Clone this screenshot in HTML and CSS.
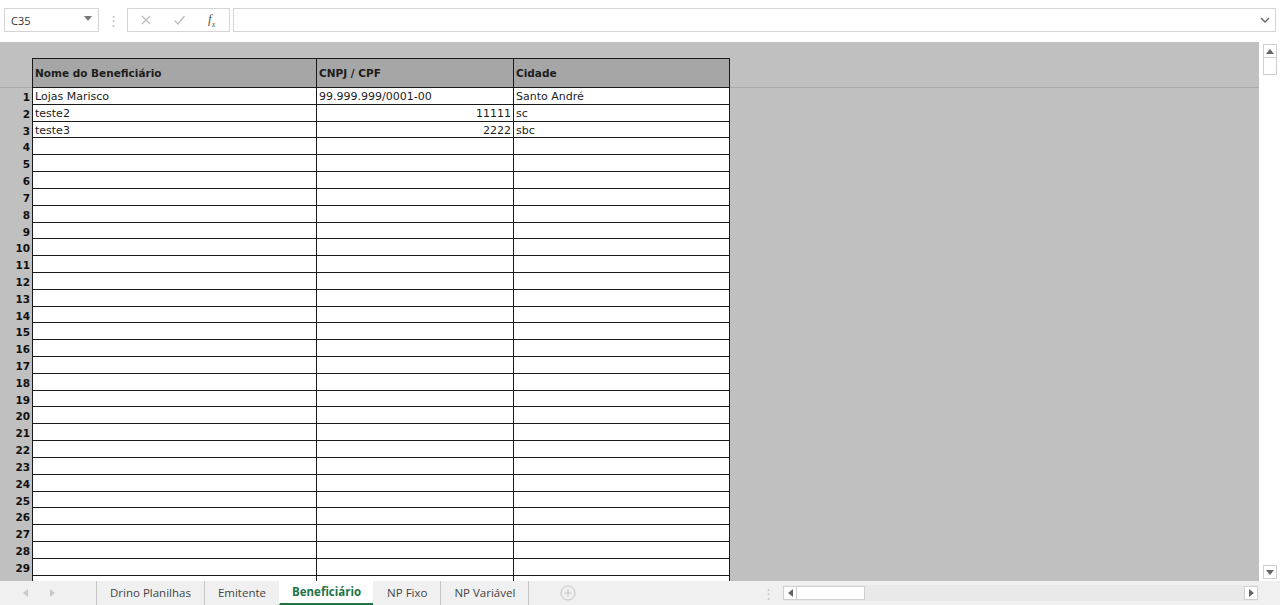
FILE: index.html
```html
<!DOCTYPE html>
<html lang="pt">
<head>
    <meta charset="UTF-8">
    <title>Beneficiário</title>
    <link rel="stylesheet" href="styles.css">
</head>
<body>
    <div class="formula-bar">
        <div class="name-box">
            <span>C35</span>
            <svg width="8" height="5" viewBox="0 0 8 5"><path d="M0 0 L8 0 L4 5 Z" fill="#777"/></svg>
        </div>
        <div class="grip">&#8942;</div>
        <div class="fx-buttons">
            <svg width="12" height="12" viewBox="0 0 12 12"><path d="M2 2 L10 10 M10 2 L2 10" stroke="#bdbdbd" stroke-width="1.2"/></svg>
            <svg width="13" height="12" viewBox="0 0 13 12"><path d="M1.5 6.5 L5 10 L11.5 2" stroke="#bdbdbd" stroke-width="1.3" fill="none"/></svg>
            <span class="fx">f<sub>x</sub></span>
        </div>
        <div class="formula-input">
            <svg width="10" height="6" viewBox="0 0 10 6"><path d="M1 1 L5 5 L9 1" stroke="#666" stroke-width="1.4" fill="none"/></svg>
        </div>
    </div>

    <div class="sheet-area">
        <div class="sheet" id="sheet">
            <div class="spacer"></div>

            <div class="rh head-line"></div>
            <div class="cell head first">Nome do Beneficiário</div>
            <div class="cell head">CNPJ / CPF</div>
            <div class="cell head">Cidade</div>
            <div class="fill head-line"></div>

            <div class="rh">1</div>
            <div class="cell first">Lojas Marisco</div>
            <div class="cell">99.999.999/0001-00</div>
            <div class="cell">Santo André</div>
            <div class="fill"></div>

            <div class="rh">2</div>
            <div class="cell first">teste2</div>
            <div class="cell num">11111</div>
            <div class="cell">sc</div>
            <div class="fill"></div>

            <div class="rh">3</div>
            <div class="cell first">teste3</div>
            <div class="cell num">2222</div>
            <div class="cell">sbc</div>
            <div class="fill"></div>
        </div>
        <div class="vscroll">
            <div class="sbtn"><svg width="8" height="5" viewBox="0 0 8 5"><path d="M0 5 L8 5 L4 0 Z" fill="#666"/></svg></div>
            <div class="vthumb"></div>
            <div class="vtrack"></div>
            <div class="sbtn"><svg width="8" height="5" viewBox="0 0 8 5"><path d="M0 0 L8 0 L4 5 Z" fill="#666"/></svg></div>
        </div>
    </div>

    <div class="tab-bar">
        <div class="tab-nav">
            <svg width="5" height="8" viewBox="0 0 5 8"><path d="M5 0 L5 8 L0 4 Z" fill="#c8c8c8"/></svg>
            <svg width="5" height="8" viewBox="0 0 5 8"><path d="M0 0 L0 8 L5 4 Z" fill="#c8c8c8"/></svg>
        </div>
        <div class="tabs">
            <div class="tab">Drino Planilhas</div>
            <div class="tab">Emitente</div>
            <div class="tab active">Beneficiário</div>
            <div class="tab">NP Fixo</div>
            <div class="tab last">NP Variável</div>
            <div class="add-tab">
                <svg width="16" height="16" viewBox="0 0 16 16"><circle cx="8" cy="8" r="7" fill="none" stroke="#c4c4c4"/><path d="M8 4.5 V11.5 M4.5 8 H11.5" stroke="#c4c4c4"/></svg>
            </div>
        </div>
        <div class="grip small">&#8942;</div>
        <div class="hscroll">
            <div class="sbtn"><svg width="5" height="8" viewBox="0 0 5 8"><path d="M5 0 L5 8 L0 4 Z" fill="#666"/></svg></div>
            <div class="hthumb"></div>
            <div class="htrack"></div>
            <div class="sbtn"><svg width="5" height="8" viewBox="0 0 5 8"><path d="M0 0 L0 8 L5 4 Z" fill="#666"/></svg></div>
        </div>
    </div>

    <script>
        // linhas vazias 4 a 30
        var sheet = document.getElementById('sheet');
        for (var i = 4; i <= 30; i++) {
            sheet.insertAdjacentHTML('beforeend',
                '<div class="rh">' + i + '</div>' +
                '<div class="cell first"></div><div class="cell"></div><div class="cell"></div>' +
                '<div class="fill"></div>');
        }
    </script>
</body>
</html>
```

FILE: styles.css
```css
body {
    margin: 0;
    padding: 0;
    width: 1280px;
    height: 605px;
    overflow: hidden;
    background: #ffffff;
    font-family: 'Open Sans', 'Noto Sans', sans-serif;
    display: flex;
    flex-direction: column;
}

/* barra de fórmulas */
.formula-bar {
    height: 42px;
    box-sizing: border-box;
    padding: 8px 4px 0 4px;
    display: flex;
    align-items: flex-start;
    background: #ffffff;
}

.name-box {
    width: 95px;
    height: 24px;
    box-sizing: border-box;
    border: 1px solid #d4d4d4;
    display: flex;
    align-items: center;
    justify-content: space-between;
    padding: 0 6px 0 6px;
    font-size: 11px;
    color: #333;
}

.name-box svg {
    margin-top: -4px;
}

.grip {
    width: 28px;
    height: 24px;
    text-align: center;
    line-height: 24px;
    color: #c4c4c4;
    font-size: 13px;
}

.grip.small {
    width: 30px;
    height: 24px;
    line-height: 24px;
    margin-left: auto;
}

.fx-buttons {
    width: 103px;
    height: 24px;
    box-sizing: border-box;
    border: 1px solid #d4d4d4;
    display: flex;
    align-items: center;
    padding-left: 12px;
    gap: 21px;
}

.fx {
    font-family: 'Liberation Serif', serif;
    font-style: italic;
    font-size: 13px;
    color: #555;
    margin-left: 1px;
}

.fx sub {
    font-size: 8px;
}

.formula-input {
    flex: 1;
    margin-left: 3px;
    height: 24px;
    box-sizing: border-box;
    border: 1px solid #d4d4d4;
    display: flex;
    align-items: center;
    justify-content: flex-end;
    padding-right: 5px;
}

/* planilha */
.sheet-area {
    height: 539px;
    display: flex;
    overflow: hidden;
}

.sheet {
    flex: 1;
    background: #c0c0c0;
    display: grid;
    grid-template-columns: 32px 285px 197px 216px 1fr;
    grid-template-rows: 16px 30px;
    grid-auto-rows: 16.82px;
    align-content: start;
    font-family: 'DejaVu Sans', sans-serif;
    color: #1c1c1c;
    overflow: hidden;
}

.spacer {
    grid-column: 1 / -1;
}

.rh {
    font-size: 10.5px;
    font-weight: bold;
    text-align: right;
    padding-right: 2px;
    line-height: 18px;
    color: #111;
}

.head-line {
    border-bottom: 1px solid #aaaaaa;
}

.cell {
    box-sizing: border-box;
    background: #ffffff;
    border-right: 1px solid #1a1a1a;
    border-bottom: 1px solid #1a1a1a;
    font-size: 11px;
    line-height: 17px;
    padding-left: 2px;
    white-space: nowrap;
    overflow: hidden;
}

.cell.first {
    border-left: 1px solid #1a1a1a;
}

.cell.num {
    text-align: right;
    padding-right: 2px;
}

.cell.head {
    background: #a6a6a6;
    border-top: 1px solid #1a1a1a;
    font-size: 10.5px;
    font-weight: bold;
    line-height: 28px;
}

/* barras de rolagem */
.vscroll {
    width: 21px;
    background: #ffffff;
    display: flex;
    flex-direction: column;
    align-items: center;
    padding: 2px 0;
    box-sizing: border-box;
}

.sbtn {
    width: 14px;
    height: 14px;
    box-sizing: border-box;
    border: 1px solid #cfcfcf;
    background: #ffffff;
    display: flex;
    align-items: center;
    justify-content: center;
}

.vthumb {
    width: 14px;
    height: 17px;
    box-sizing: border-box;
    border: 1px solid #cfcfcf;
    border-top: none;
}

.vtrack {
    flex: 1;
}

.tab-bar {
    height: 24px;
    background: #f0f0f0;
    display: flex;
    align-items: stretch;
    font-size: 11.5px;
    color: #444;
}

.tab-nav {
    width: 96px;
    flex-shrink: 0;
    display: flex;
    align-items: center;
    padding-left: 23px;
    box-sizing: border-box;
    gap: 22px;
}

.tabs {
    display: flex;
    align-items: stretch;
}

.tab {
    padding: 0 13px;
    line-height: 24px;
    border-left: 1px solid #c6c6c6;
    margin: 0;
    white-space: nowrap;
}

.tab.last {
    border-right: 1px solid #c6c6c6;
}

.tab.active {
    background: #ffffff;
    color: #217346;
    font-weight: bold;
    border-bottom: 2px solid #217346;
    line-height: 22px;
    border-left-color: transparent;
    padding: 0 12px;
}

.tab.active + .tab {
    border-left-color: transparent;
}

.add-tab {
    display: flex;
    align-items: center;
    padding-left: 31px;
}

.hscroll {
    width: 475px;
    margin-right: 22px;
    display: flex;
    align-items: center;
    background: #e9e9e9;
    height: 16px;
    margin-top: 4px;
}

.hthumb {
    width: 68px;
    height: 14px;
    box-sizing: border-box;
    border: 1px solid #cfcfcf;
    border-left: none;
    background: #ffffff;
}

.htrack {
    flex: 1;
}
```
